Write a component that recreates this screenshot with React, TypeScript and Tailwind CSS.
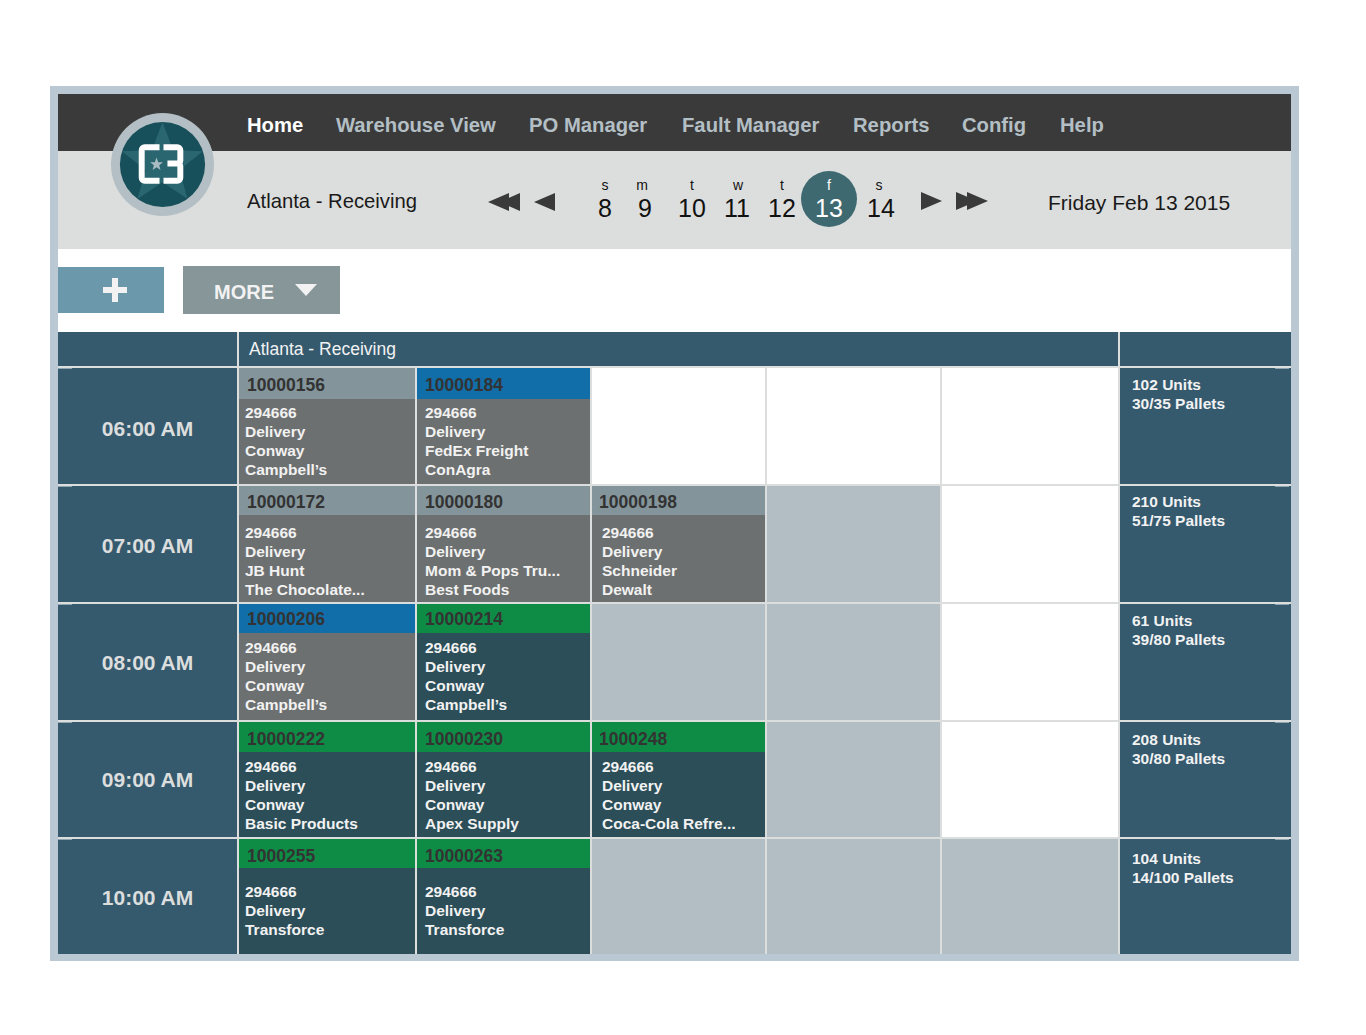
import React from "react";

const GRAY = { head: "bg-[#83959b]", body: "bg-[#6d7070]" };
const BLUE = { head: "bg-[#126ea8]", body: "bg-[#6d7070]" };
const GREEN = { head: "bg-[#0e8c46]", body: "bg-[#2b4e58]" };

const NAV = [
  { label: "Home", w: "w-[89px]", active: true },
  { label: "Warehouse View", w: "w-[193px]" },
  { label: "PO Manager", w: "w-[153px]" },
  { label: "Fault Manager", w: "w-[171px]" },
  { label: "Reports", w: "w-[109px]" },
  { label: "Config", w: "w-[98px]" },
  { label: "Help", w: "w-[60px]" },
];

const DAYS = [
  { l: "s", n: "8", w: "w-[40px]", nudge: "" },
  { l: "m", n: "9", w: "w-[40px]", nudge: "-translate-x-[3px]" },
  { l: "t", n: "10", w: "w-[54px]", nudge: "" },
  { l: "w", n: "11", w: "w-[36px]", nudge: "translate-x-[1px]" },
  { l: "t", n: "12", w: "w-[54px]", nudge: "" },
  { l: "f", n: "13", w: "w-[40px]", nudge: "", active: true },
  { l: "s", n: "14", w: "w-[64px]", nudge: "-translate-x-[2px]" },
];

type Slot = { id: string; tone: typeof GRAY; lines: string[] } | "free" | "closed";

const BODY_LEFT = ["pl-[6px]", "pl-[8px]", "pl-[10px]", "pl-[8px]", "pl-[8px]"];
const HEAD_LEFT = ["pl-[8px]", "pl-[8px]", "pl-[7px]", "pl-[8px]", "pl-[8px]"];

const ROWS: {
  time: string;
  timePad: string;
  units: string;
  pallets: string;
  sidePad: string;
  h: string;
  head: string;
  headPad: string;
  pad: string;
  slots: Slot[];
}[] = [
  {
    time: "06:00 AM",
    timePad: "pt-[6px]",
    units: "102 Units",
    pallets: "30/35 Pallets",
    sidePad: "pt-[7px]",
    h: "h-[116px]",
    head: "h-[31px]",
    headPad: "pt-[3px]",
    pad: "pt-[4px]",
    slots: [
      { id: "10000156", tone: GRAY, lines: ["294666", "Delivery", "Conway", "Campbell’s"] },
      { id: "10000184", tone: BLUE, lines: ["294666", "Delivery", "FedEx Freight", "ConAgra"] },
      "free",
      "free",
      "free",
    ],
  },
  {
    time: "07:00 AM",
    timePad: "pt-[4px]",
    units: "210 Units",
    pallets: "51/75 Pallets",
    sidePad: "pt-[6px]",
    h: "h-[116px]",
    head: "h-[29px]",
    headPad: "pt-[3px]",
    pad: "pt-[8px]",
    slots: [
      { id: "10000172", tone: GRAY, lines: ["294666", "Delivery", "JB Hunt", "The Chocolate..."] },
      { id: "10000180", tone: GRAY, lines: ["294666", "Delivery", "Mom & Pops Tru...", "Best Foods"] },
      { id: "10000198", tone: GRAY, lines: ["294666", "Delivery", "Schneider", "Dewalt"] },
      "closed",
      "free",
    ],
  },
  {
    time: "08:00 AM",
    timePad: "pt-[2px]",
    units: "61 Units",
    pallets: "39/80 Pallets",
    sidePad: "pt-[7px]",
    h: "h-[116px]",
    head: "h-[29px]",
    headPad: "pt-[1px]",
    pad: "pt-[5px]",
    slots: [
      { id: "10000206", tone: BLUE, lines: ["294666", "Delivery", "Conway", "Campbell’s"] },
      { id: "10000214", tone: GREEN, lines: ["294666", "Delivery", "Conway", "Campbell’s"] },
      "closed",
      "closed",
      "free",
    ],
  },
  {
    time: "09:00 AM",
    timePad: "",
    units: "208 Units",
    pallets: "30/80 Pallets",
    sidePad: "pt-[8px]",
    h: "h-[115px]",
    head: "h-[30px]",
    headPad: "pt-[5px]",
    pad: "pt-[5px]",
    slots: [
      { id: "10000222", tone: GREEN, lines: ["294666", "Delivery", "Conway", "Basic Products"] },
      { id: "10000230", tone: GREEN, lines: ["294666", "Delivery", "Conway", "Apex Supply"] },
      { id: "1000248", tone: GREEN, lines: ["294666", "Delivery", "Conway", "Coca-Cola Refre..."] },
      "closed",
      "free",
    ],
  },
  {
    time: "10:00 AM",
    timePad: "pt-[2px]",
    units: "104 Units",
    pallets: "14/100 Pallets",
    sidePad: "pt-[10px]",
    h: "h-[115px]",
    head: "h-[29px]",
    headPad: "pt-[5px]",
    pad: "pt-[14px]",
    slots: [
      { id: "1000255", tone: GREEN, lines: ["294666", "Delivery", "Transforce"] },
      { id: "10000263", tone: GREEN, lines: ["294666", "Delivery", "Transforce"] },
      "closed",
      "closed",
      "closed",
    ],
  },
];

function Logo() {
  return (
    <svg viewBox="0 0 104 104" className="absolute left-[111px] top-[113px] h-[103px] w-[103px]">
      <circle cx="52" cy="52" r="52" fill="#b3bfc4" />
      <circle cx="52" cy="52" r="43" fill="#174f5a" />
      <polygon
        points="52,9 62.6,37.4 92.9,38.7 69.1,57.5 77.3,86.8 52,70 26.7,86.8 34.9,57.5 11.1,38.7 41.4,37.4"
        fill="#2a6670"
      />
      <path
        d="M49 34.5H34a3 3 0 0 0-3 3V65.5a3 3 0 0 0 3 3H49"
        fill="none"
        stroke="#ffffff"
        strokeWidth="6"
      />
      <path
        d="M53 34.5H67a3 3 0 0 1 3 3V48a3 3 0 0 1-3 3H57M67 51a3 3 0 0 1 3 3V65.5a3 3 0 0 1-3 3H53"
        fill="none"
        stroke="#ffffff"
        strokeWidth="6"
      />
      <polygon
        points="46,45 47.7,49.7 52.5,49.8 48.7,52.8 50,57.5 46,54.8 42,57.5 43.3,52.8 39.5,49.8 44.3,49.7"
        fill="#a9bcc2"
      />
    </svg>
  );
}

function Arrow({ flip, double }: { flip?: boolean; double?: boolean }) {
  const width = double ? 32 : 21;
  return (
    <svg
      viewBox={`0 0 ${width} 18`}
      width={width}
      height={18}
      className={flip ? "-scale-x-100" : ""}
      fill="#3a3a3a"
    >
      {double ? (
        <>
          <polygon points="0,0 21,9 0,18" />
          <polygon points="11,0 32,9 11,18" />
        </>
      ) : (
        <polygon points="0,0 21,9 0,18" />
      )}
    </svg>
  );
}

function SlotCell({ slot, head, headPad, pad, col }: { slot: Slot; head: string; headPad: string; pad: string; col: number }) {
  if (slot === "free") return <div className="bg-white" />;
  if (slot === "closed") return <div className="bg-[#b3bec4]" />;
  return (
    <div className={`flex flex-col ${slot.tone.body}`}>
      <div
        className={`${head} ${headPad} ${HEAD_LEFT[col]} ${slot.tone.head} flex items-center text-[17.5px] font-bold text-[#333333]`}
      >
        {slot.id}
      </div>
      <div className={`${pad} ${BODY_LEFT[col]} text-[15.5px] font-bold leading-[19px] text-[#f2f2f2]`}>
        {slot.lines.map((line) => (
          <div key={line}>{line}</div>
        ))}
      </div>
    </div>
  );
}

export default function App() {
  return (
    <div className="relative h-[1035px] w-[1366px] bg-white pl-[50px] pt-[86px] font-['Liberation_Sans',Arial,sans-serif]">
      <div className="w-[1249px] border-x-[8px] border-t-[8px] border-b-[7px] border-[#b9c8d2] bg-white">
        <nav className="flex h-[57px] items-center bg-[#3a3a3a] pt-[5px] pl-[189px] text-[20.25px] font-bold text-[#b3bfc4]">
          {NAV.map((item) => (
            <span key={item.label} className={`${item.w} shrink-0 whitespace-nowrap ${item.active ? "text-white" : ""}`}>
              {item.label}
            </span>
          ))}
        </nav>

        <div className="flex h-[98px] items-center bg-[#dcdedd] pl-[189px] text-[#1a1a1a]">
          <div className="w-[241px] whitespace-nowrap pt-[2px] text-[20.25px]">Atlanta - Receiving</div>
          <div className="flex items-center gap-[14px] pt-[4px]">
            <Arrow flip double />
            <Arrow flip />
          </div>
          <div className="ml-[30px] flex text-[#111111]">
            {DAYS.map((d) => (
              <div key={d.n} className={`${d.w} relative flex shrink-0 flex-col items-center`}>
                {d.active && (
                  <span className="absolute left-1/2 top-[-7px] h-[56px] w-[56px] -translate-x-1/2 rounded-full bg-[#3f6971]" />
                )}
                <span className={`relative text-[14px] leading-[15px] ${d.nudge} ${d.active ? "text-white" : ""}`}>{d.l}</span>
                <span className={`relative text-[25px] leading-[30px] ${d.active ? "text-white" : ""}`}>{d.n}</span>
              </div>
            ))}
          </div>
          <div className="ml-[8px] flex items-center gap-[14px] pt-[2px]">
            <Arrow />
            <Arrow double />
          </div>
          <div className="ml-[60px] whitespace-nowrap pt-[5px] text-[21px]">Friday Feb 13 2015</div>
        </div>

        <div className="flex h-[83px] items-start gap-[19px] pt-[17px]">
          <div className="mt-[1px] flex h-[46px] w-[106px] items-center justify-center bg-[#6b99ab] pl-[8px]">
            <svg viewBox="0 0 24 24" width="24" height="24" fill="#f2f2f2">
              <rect x="0" y="9" width="24" height="6" />
              <rect x="9" y="0" width="6" height="24" />
            </svg>
          </div>
          <div className="flex h-[48px] w-[157px] items-center gap-[21px] bg-[#869699] pl-[31px] pt-[3px] text-[20px] font-bold text-[#f2f2f2]">
            MORE
            <svg viewBox="0 0 22 12" width="22" height="12" fill="#f2f2f2" className="-mt-[4px]">
              <polygon points="0,0 22,0 11,12" />
            </svg>
          </div>
        </div>

        <div className="bg-[#dcdedd]">
          <div className="grid h-[36px] grid-cols-[179px_879px_171px] gap-x-[2px] pb-[2px]">
            <div className="bg-[#355a6e]" />
            <div className="flex items-center bg-[#355a6e] pl-[10px] text-[17.5px] text-[#f2f2f2]">
              Atlanta - Receiving
            </div>
            <div className="bg-[#355a6e]" />
          </div>
          <div className="flex flex-col gap-y-[2px]">
            {ROWS.map((row) => (
              <div
                key={row.time}
                className={`grid ${row.h} grid-cols-[179px_176px_173px_173px_173px_176px_171px] gap-x-[2px]`}
              >
                <div className={`relative flex items-center justify-center bg-[#355a6e] ${row.timePad} text-[21px] font-bold text-[#dcdedd]`}>
                  <span className="absolute left-0 top-0 h-px w-[14px] bg-[#8fa5b1]" />
                  {row.time}
                </div>
                {row.slots.map((slot, i) => (
                  <SlotCell key={i} slot={slot} head={row.head} headPad={row.headPad} pad={row.pad} col={i} />
                ))}
                <div className={`relative bg-[#355a6e] pl-[12px] ${row.sidePad} text-[15.5px] font-bold leading-[19px] text-[#f2f2f2]`}>
                  <span className="absolute right-[2px] top-0 h-px w-[14px] bg-[#8fa5b1]" />
                  <div>{row.units}</div>
                  <div>{row.pallets}</div>
                </div>
              </div>
            ))}
          </div>
        </div>
      </div>
      <Logo />
    </div>
  );
}
